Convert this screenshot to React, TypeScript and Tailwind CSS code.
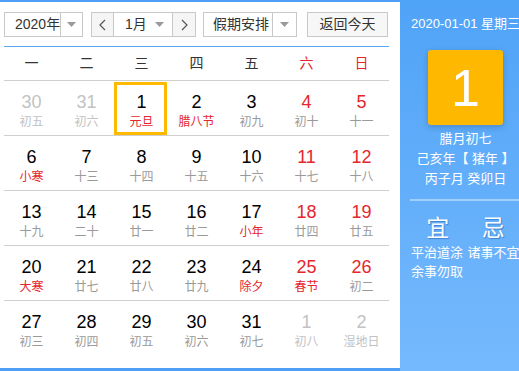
const font = { fontFamily: '"Liberation Sans", "Noto Sans CJK SC", sans-serif' };

type Day = { n: number; lunar: string; other?: boolean; fest?: boolean };

const weeks: Day[][] = [
  [
    { n: 30, lunar: '初五', other: true },
    { n: 31, lunar: '初六', other: true },
    { n: 1, lunar: '元旦', fest: true },
    { n: 2, lunar: '腊八节', fest: true },
    { n: 3, lunar: '初九' },
    { n: 4, lunar: '初十' },
    { n: 5, lunar: '十一' },
  ],
  [
    { n: 6, lunar: '小寒', fest: true },
    { n: 7, lunar: '十三' },
    { n: 8, lunar: '十四' },
    { n: 9, lunar: '十五' },
    { n: 10, lunar: '十六' },
    { n: 11, lunar: '十七' },
    { n: 12, lunar: '十八' },
  ],
  [
    { n: 13, lunar: '十九' },
    { n: 14, lunar: '二十' },
    { n: 15, lunar: '廿一' },
    { n: 16, lunar: '廿二' },
    { n: 17, lunar: '小年', fest: true },
    { n: 18, lunar: '廿四' },
    { n: 19, lunar: '廿五' },
  ],
  [
    { n: 20, lunar: '大寒', fest: true },
    { n: 21, lunar: '廿七' },
    { n: 22, lunar: '廿八' },
    { n: 23, lunar: '廿九' },
    { n: 24, lunar: '除夕', fest: true },
    { n: 25, lunar: '春节', fest: true },
    { n: 26, lunar: '初二' },
  ],
  [
    { n: 27, lunar: '初三' },
    { n: 28, lunar: '初四' },
    { n: 29, lunar: '初五' },
    { n: 30, lunar: '初六' },
    { n: 31, lunar: '初七' },
    { n: 1, lunar: '初八', other: true },
    { n: 2, lunar: '湿地日', other: true },
  ],
];

const weekdays = ['一', '二', '三', '四', '五', '六', '日'];

function Caret() {
  return (
    <svg width="9" height="5" viewBox="0 0 9 5">
      <path d="M0 0 L9 0 L4.5 5 Z" fill="#9a9a9a" />
    </svg>
  );
}

function Chevron({ dir }: { dir: 'left' | 'right' }) {
  return (
    <svg width="7" height="12" viewBox="0 0 7 12">
      <path
        d={dir === 'left' ? 'M6 1 L1 6 L6 11' : 'M1 1 L6 6 L1 11'}
        fill="none"
        stroke="#555"
        strokeWidth="1.2"
      />
    </svg>
  );
}

function Toolbar() {
  return (
    <div className="flex items-center h-[25px] mt-[10px] text-[14px] text-[#333] whitespace-nowrap">
      <div className="flex h-full w-[79px] border border-[#c8c8c8] bg-white">
        <div className="flex-1 flex items-center pl-[10px]">2020年</div>
        <div className="w-[24px] border-l border-[#c8c8c8] flex items-center justify-center">
          <Caret />
        </div>
      </div>
      <div className="flex h-full w-[105px] ml-[8px] border border-[#c8c8c8] bg-white">
        <div className="w-[22px] bg-[#f5f5f5] border-r border-[#c8c8c8] flex items-center justify-center">
          <Chevron dir="left" />
        </div>
        <div className="flex-1 flex items-center justify-between pl-[11px] pr-[8px]">
          <span>1月</span>
          <Caret />
        </div>
        <div className="w-[23px] bg-[#f5f5f5] border-l border-[#c8c8c8] flex items-center justify-center">
          <Chevron dir="right" />
        </div>
      </div>
      <div className="flex h-full w-[94px] ml-[7px] border border-[#c8c8c8] bg-white">
        <div className="flex-1 flex items-center pl-[9px]">假期安排</div>
        <div className="w-[24px] border-l border-[#c8c8c8] flex items-center justify-center">
          <Caret />
        </div>
      </div>
      <div className="flex h-full w-[81px] ml-[10px] border border-[#c8c8c8] bg-[#f7f7f7] items-center justify-center">
        返回今天
      </div>
    </div>
  );
}

function Cell({ d, col }: { d: Day; col: number }) {
  const weekend = col >= 5;
  const numColor = d.other ? 'text-[#c2c2c2]' : weekend ? 'text-[#e5262d]' : 'text-black';
  const lunarColor = d.other ? 'text-[#c2c2c2]' : d.fest ? 'text-[#e5262d]' : 'text-[#9a9a9a]';
  const selected = !d.other && d.n === 1;
  return (
    <div className="relative flex flex-col items-center pt-[10px]">
      {selected && (
        <div className="absolute left-0 right-[2px] top-[1px] bottom-0 border-[3px] border-[#ffb900]" />
      )}
      <div className={`text-[18px] leading-[22px] ${numColor}`}>{d.n}</div>
      <div className={`text-[12px] leading-[16px] mt-[1px] ${lunarColor}`}>{d.lunar}</div>
    </div>
  );
}

function Calendar() {
  return (
    <div className="w-[385px] mt-[9px] border-t border-[#5aa7f2]">
      <div className="grid grid-cols-7 h-[34px] border-b border-[#cfcfcf] text-[14px] items-center">
        {weekdays.map((w, i) => (
          <div key={w} className={`text-center ${i >= 5 ? 'text-[#e5262d]' : 'text-[#333]'}`}>
            {w}
          </div>
        ))}
      </div>
      {weeks.map((week, r) => (
        <div
          key={r}
          className={`grid grid-cols-7 h-[55px] ${r < weeks.length - 1 ? 'border-b border-[#cfcfcf]' : ''}`}
        >
          {week.map((d, c) => (
            <Cell key={c} d={d} col={c} />
          ))}
        </div>
      ))}
    </div>
  );
}

function SidePanel() {
  return (
    <div className="w-[131px] shrink-0 h-full bg-gradient-to-b from-[#4fa3f7] to-[#75b9fd] text-white flex flex-col items-center">
      <div className="mt-[16px] text-[13px] leading-[16px] whitespace-nowrap">2020-01-01 星期三</div>
      <div className="mt-[18px] w-[75px] h-[75px] rounded-[3px] bg-[#ffb800] shadow-[0_2px_6px_rgba(0,0,0,0.2)] flex items-center justify-center">
        <span className="text-[52px] leading-none">1</span>
      </div>
      <div className="mt-[4px] text-[13px] leading-[20px] text-center whitespace-pre">
        <div>腊月初七</div>
        <div>己亥年【 猪年 】</div>
        <div>丙子月 癸卯日</div>
      </div>
      <div className="mt-[10px] w-[111px] h-[2px] bg-white/40" />
      <div className="w-[111px] grid grid-cols-2 mt-[14px]">
        <div className="flex flex-col">
          <div className="text-center text-[23px] leading-[26px] [text-shadow:1px_1px_1px_rgba(0,60,140,0.4)]">宜</div>
          <div className="text-[13px] leading-[19px] mt-[2px] whitespace-nowrap pl-[1px]">
            <div>平治道涂</div>
            <div>余事勿取</div>
          </div>
        </div>
        <div className="flex flex-col">
          <div className="text-center text-[23px] leading-[26px] [text-shadow:1px_1px_1px_rgba(0,60,140,0.4)]">忌</div>
          <div className="text-[13px] leading-[19px] mt-[2px] whitespace-nowrap pl-[2px]">
            <div>诸事不宜</div>
          </div>
        </div>
      </div>
    </div>
  );
}

export default function App() {
  return (
    <div className="w-[519px] h-[371px] overflow-hidden bg-white" style={font}>
      <div className="w-[531px] h-[371px] flex">
        <div className="w-[400px] h-full shrink-0 border-t-2 border-b-[3px] border-[#4e9ff5] pl-[4px]">
          <Toolbar />
          <Calendar />
        </div>
        <SidePanel />
      </div>
    </div>
  );
}
